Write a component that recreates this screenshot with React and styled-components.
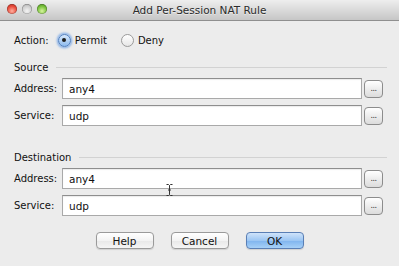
import styled, { createGlobalStyle } from 'styled-components'

const GlobalStyles = createGlobalStyle`
	html, body {
		margin: 0;
		padding: 0;
		background: #ececec;
	}
	* {
		box-sizing: border-box;
	}
`

const sections = [
	{
		title: 'Source',
		rows: [
			{ label: 'Address:', value: 'any4' },
			{ label: 'Service:', value: 'udp' },
		],
	},
	{
		title: 'Destination',
		rows: [
			{ label: 'Address:', value: 'any4' },
			{ label: 'Service:', value: 'udp' },
		],
	},
]

export default function App() {
	return (
		<>
			<GlobalStyles />
			<Window>
				<TitleBar>
					<Lights>
						<Light $color='red' />
						<Light $color='gray' />
						<Light $color='green' />
					</Lights>
					<Title>Add Per-Session NAT Rule</Title>
				</TitleBar>

				<Content>
					<ActionRow>
						<Label>Action:</Label>
						<RadioOption>
							<Radio $checked />
							Permit
						</RadioOption>
						<RadioOption>
							<Radio />
							Deny
						</RadioOption>
					</ActionRow>

					{sections.map((section, i) => (
						<Section key={section.title} $first={i === 0}>
							<SectionHeader>
								<span>{section.title}</span>
								<Rule />
							</SectionHeader>
							{section.rows.map((row) => (
								<FieldRow key={row.label}>
									<FieldLabel>{row.label}</FieldLabel>
									<Input>{row.value}</Input>
									<BrowseButton>...</BrowseButton>
								</FieldRow>
							))}
						</Section>
					))}

					<Footer>
						<Button>Help</Button>
						<Button>Cancel</Button>
						<Button $primary>OK</Button>
					</Footer>
				</Content>

				<Cursor width='7' height='12' viewBox='0 0 7 12'>
					<path
						d='M0.5 0.5 H2.5 L3.5 1.5 L4.5 0.5 H6.5 M3.5 1.5 V10.5 M0.5 11.5 H2.5 L3.5 10.5 L4.5 11.5 H6.5 M2 6 H5'
						stroke='#333'
						strokeWidth='1'
						fill='none'
					/>
				</Cursor>
			</Window>
		</>
	)
}

const Window = styled.div`
	position: relative;
	width: 399px;
	height: 266px;
	background: #ececec;
	font-family: 'DejaVu Sans', 'Liberation Sans', sans-serif;
	font-size: 10px;
	color: #111;
	overflow: hidden;
`

const TitleBar = styled.div`
	position: relative;
	height: 21px;
	display: flex;
	align-items: center;
	justify-content: center;
	background: linear-gradient(#eeeeee, #d6d6d6 60%, #c6c6c6);
	border-bottom: 1px solid #8f8f8f;
`

const Lights = styled.div`
	position: absolute;
	left: 7px;
	top: 4px;
	display: flex;
	gap: 5px;
`

const lightColors = {
	red: 'radial-gradient(circle at 50% 70%, #ffb0a0, #e84a3a 55%, #a52a20)',
	gray: 'radial-gradient(circle at 50% 70%, #f4f4f4, #cfcfcf 55%, #9a9a9a)',
	green: 'radial-gradient(circle at 50% 70%, #d8f5a0, #78c03a 55%, #3f7f1c)',
}

const Light = styled.span`
	width: 10px;
	height: 10px;
	border-radius: 50%;
	background: ${({ $color }) => lightColors[$color]};
	box-shadow: inset 0 0 0 0.5px rgba(0, 0, 0, 0.35);
`

const Title = styled.div`
	font-size: 10.5px;
	color: #2b2b2b;
	text-shadow: 0 1px 0 rgba(255, 255, 255, 0.5);
`

const Content = styled.div`
	padding: 10px 16px 0 14px;
`

const ActionRow = styled.div`
	height: 18px;
	display: flex;
	align-items: center;
`

const Label = styled.span`
	margin-right: 9px;
`

const RadioOption = styled.label`
	display: flex;
	align-items: center;
	gap: 4px;
	margin-right: 14px;
`

const Radio = styled.span`
	width: 13px;
	height: 13px;
	border-radius: 50%;
	display: flex;
	align-items: center;
	justify-content: center;
	background: ${({ $checked }) =>
		$checked
			? 'linear-gradient(#d7e8fb, #8ebbee)'
			: 'linear-gradient(#ffffff, #e6e6e6)'};
	border: 1px solid ${({ $checked }) => ($checked ? '#4f7fc0' : '#9a9a9a')};
	box-shadow: ${({ $checked }) =>
		$checked ? '0 0 2px 1.5px rgba(90, 150, 230, 0.6)' : 'none'};

	&::after {
		content: '';
		width: 4px;
		height: 4px;
		border-radius: 50%;
		background: #1f1f1f;
		display: ${({ $checked }) => ($checked ? 'block' : 'none')};
	}
`

const Section = styled.div`
	margin-top: ${({ $first }) => ($first ? '11px' : '24px')};
`

const SectionHeader = styled.div`
	height: 14px;
	display: flex;
	align-items: center;
	gap: 8px;
	margin-bottom: 4px;
	margin-right: -4px;
`

const Rule = styled.div`
	flex: 1;
	height: 1px;
	background: #d2d2d2;
`

const FieldRow = styled.div`
	display: flex;
	align-items: center;
	height: 21px;
	& + & {
		margin-top: 6px;
	}
`

const FieldLabel = styled.span`
	width: 48px;
`

const Input = styled.div`
	flex: 1;
	height: 21px;
	display: flex;
	align-items: center;
	padding-left: 6px;
	background: #fff;
	border: 1px solid #a9a9a9;
	border-top-color: #8e8e8e;
	box-shadow: inset 0 1px 1px rgba(0, 0, 0, 0.08);
	font-size: 10.5px;
`

const BrowseButton = styled.div`
	width: 19px;
	height: 18px;
	margin-left: 2px;
	border-radius: 4px;
	border: 1px solid #8c8c8c;
	background: linear-gradient(#ffffff, #e9e9e9 60%, #dcdcdc);
	display: flex;
	align-items: center;
	justify-content: center;
	font-size: 8px;
	line-height: 1;
	letter-spacing: -0.5px;
	color: #333;
`

const Footer = styled.div`
	display: flex;
	justify-content: center;
	gap: 17px;
	margin-top: 16px;
	padding-left: 2px;
`

const Button = styled.div`
	width: 58px;
	height: 17px;
	display: flex;
	align-items: center;
	justify-content: center;
	border-radius: 4px;
	font-size: 10.5px;
	color: #111;
	border: 1px solid ${({ $primary }) => ($primary ? '#5a7fb5' : '#9a9a9a')};
	background: ${({ $primary }) =>
		$primary
			? 'linear-gradient(#cfe3fa, #9cc6f3 50%, #7fb4ee 51%, #a7d0f7)'
			: 'linear-gradient(#ffffff, #f3f3f3 50%, #e8e8e8 51%, #f5f5f5)'};
	box-shadow: 0 1px 1px rgba(0, 0, 0, 0.12);
`

const Cursor = styled.svg`
	position: absolute;
	left: 166px;
	top: 184px;
`
